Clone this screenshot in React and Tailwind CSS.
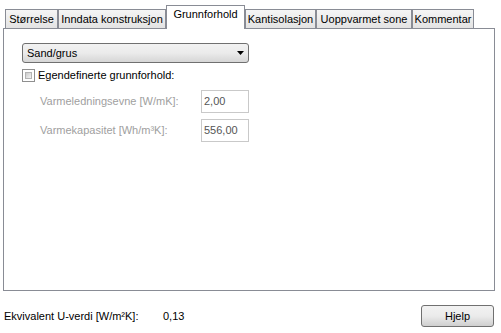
import React from 'react';

const tabs = [
    { label: 'Størrelse', w: 'w-[53px]' },
    { label: 'Inndata konstruksjon', w: 'w-[108px]' },
    { label: 'Grunnforhold', w: 'w-[79px]', active: true },
    { label: 'Kantisolasjon', w: 'w-[71px]' },
    { label: 'Uoppvarmet sone', w: 'w-[96px]' },
    { label: 'Kommentar', w: 'w-[62px]' },
];

function Tab({ tab }) {
    if (tab.active) {
        return (
            <div className={`${tab.w} h-[24px] relative z-10 -mb-px flex items-start justify-center pt-[3px] bg-white border border-b-0 border-[#898c95] text-black`}>
                {tab.label}
            </div>
        );
    }
    return (
        <div className={`${tab.w} h-[19px] flex items-center justify-center border border-b-0 border-[#898c95] bg-gradient-to-b from-[#f5f5f5] to-[#e3e3e3] text-black`}>
            {tab.label}
        </div>
    );
}

function Field({ label, value }) {
    return (
        <div className="flex items-center h-[23px]">
            <div className="pl-[18px] w-[179px] text-[#a0a0a0]">{label}</div>
            <div className="w-[48px] h-[23px] border border-[#c9c9c9] bg-white flex items-center pl-[2px] text-[#555]">
                {value}
            </div>
        </div>
    );
}

export default function App() {
    return (
        <div className="w-[501px] h-[333px] bg-white text-[11px] leading-none overflow-hidden" style={{ fontFamily: '"Liberation Sans", Arial, sans-serif' }}>
            <div className="pl-[3px] pt-[5px]">
                <div className="flex items-end pl-[2px] h-[23px]">
                    {tabs.map((t) => (
                        <Tab key={t.label} tab={t} />
                    ))}
                </div>
                <div className="w-[492px] h-[263px] border border-[#898c95] bg-white pl-[18px] pt-[14px] flex flex-col">
                    <div className="w-[227px] h-[20px] rounded-[3px] border border-[#707070] bg-gradient-to-b from-[#f2f2f2] via-[#ebebeb] to-[#d6d6d6] flex items-center justify-between pl-[4px] pr-[4px] text-black">
                        <span>Sand/grus</span>
                        <svg width="7" height="4" viewBox="0 0 7 4">
                            <path d="M0 0 H7 L3.5 4 Z" fill="#000" />
                        </svg>
                    </div>
                    <div className="flex items-center mt-[6px] h-[13px]">
                        <div className="w-[13px] h-[13px] border border-[#8f8f8f] bg-white p-[2px]">
                            <div className="w-full h-full bg-gradient-to-br from-[#cbcbcb] to-[#f4f4f4] border border-[#b4b4b4]"></div>
                        </div>
                        <span className="ml-[3px] text-black">Egendefinerte grunnforhold:</span>
                    </div>
                    <div className="mt-[8px] flex flex-col gap-[6px]">
                        <Field label="Varmeledningsevne [W/mK]:" value="2,00" />
                        <Field label="Varmekapasitet [Wh/m³K]:" value="556,00" />
                    </div>
                </div>
            </div>
            <div className="flex items-center justify-between mt-[14px] pl-[4px] pr-[7px]">
                <div className="flex items-center text-black">
                    <span className="w-[159px]">Ekvivalent U-verdi [W/m²K]:</span>
                    <span>0,13</span>
                </div>
                <div className="w-[73px] h-[22px] rounded-[3px] border border-[#707070] bg-gradient-to-b from-[#f2f2f2] via-[#ebebeb] to-[#cfcfcf] flex items-center justify-center text-black">
                    Hjelp
                </div>
            </div>
        </div>
    );
}
